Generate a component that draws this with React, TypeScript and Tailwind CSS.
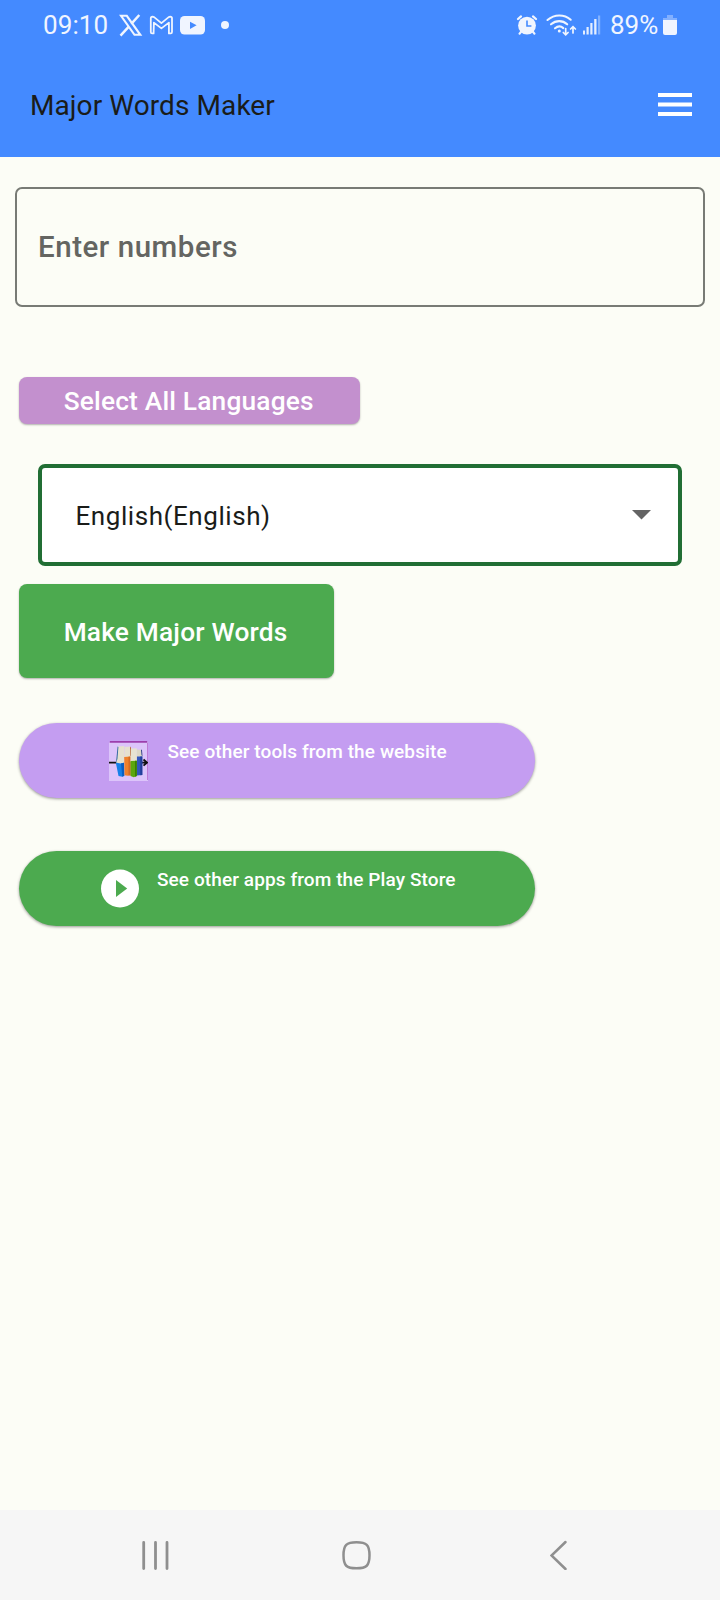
import React from "react";

function StatusLeft() {
  return (
    <svg className="ml-[10px] h-[30px] w-[116px]" viewBox="119 10 116 30" fill="none">
      <path d="M121 15.800h5.800l13.500 19h-5.800z" stroke="#f0f5ff" strokeWidth="2.100" />
      <path d="M139.300 15l-8 8.800M128.800 26.600l-8.300 9" stroke="#f0f5ff" strokeWidth="2.500" />
      <path
        d="M153.600 33.400h-1.500q-1.300 0-1.300-1.500V18.300q0-1.700 1.700-1.700l1.600.5 7.300 6 7.300-6 1.600-.5q1.700 0 1.700 1.700v13.600q0 1.500-1.300 1.500h-1.800V22.600l-7.500 5.800-7.500-5.800z"
        stroke="#f0f5ff"
        strokeWidth="1.800"
        strokeLinejoin="round"
      />
      <rect x="180" y="16" width="25" height="18.600" rx="4.500" fill="#f0f5ff" />
      <path d="M190 21.700v7.200l6.600-3.600z" fill="#448aff" />
      <circle cx="225" cy="25" r="4" fill="#f0f5ff" />
    </svg>
  );
}

function StatusRight() {
  return (
    <svg className="mr-[9px] h-[30px] w-[85px]" viewBox="516 10 85 30" fill="none">
      <g stroke="#f0f5ff" strokeLinecap="round">
        <circle cx="527" cy="25.600" r="8.900" fill="#f0f5ff" stroke="none" />
        <path d="M518 19l3-2.600M536 19l-3-2.600M521.200 31.600l-1.600 2M532.800 31.600l1.600 2" strokeWidth="2.300" />
        <path d="M527 20.600v5.400h4.400" stroke="#448aff" strokeWidth="1.600" strokeLinecap="butt" />
        <path d="M547.500 20c7-6 16.500-6 23.200-.3M551 24.300c5-4.200 11.500-4.200 16.200 0M555 28.300c2.700-2.200 6-2.200 8.300-.2" strokeWidth="2.100" />
        <circle cx="559.300" cy="31" r="1.500" fill="#f0f5ff" stroke="none" />
        <path d="M565.700 28.500v6M563.300 32.500l2.400 2.400 2.400-2.400M573 33v-6M570.600 29l2.400-2.400 2.400 2.400" strokeWidth="1.700" />
      </g>
      <g fill="#e4eeff">
        <rect x="583" y="30.500" width="2" height="4" />
        <rect x="586.500" y="27" width="2.200" height="7.500" />
        <rect x="590.300" y="23" width="2.200" height="11.500" />
        <rect x="594.200" y="19" width="2.300" height="15.500" />
        <rect x="598" y="15.500" width="2.200" height="19" opacity=".4" />
      </g>
    </svg>
  );
}

function BooksIcon() {
  return (
    <svg className="h-10 w-[39px] shrink-0" viewBox="0 0 39 40">
      <path d="M0 1h39v39H0z" fill="#dcc4fa" />
      <path d="M1 0h37l.5 1.800H.5z" fill="#9c3fac" />
      <path d="M38.500 2v37" stroke="#bd7bd6" />
      <path d="M0 21.600h8M32 21.600h6M34.500 18.500l3.500 3.100-3.500 3.100" stroke="#111" strokeWidth="1.800" fill="none" />
      <path d="M9 5.500l6.300-.5v17l-8.300.5z" fill="#e6e1cf" />
      <path d="M8.600 5.500l.8.500-1 12-1.400 4z" fill="#2a62a0" />
      <path d="M6.800 21.500l4.700 1 3.500-.8.300 13-2 1-3.800-.6z" fill="#1680e8" />
      <path d="M12 22.500l3-.8.300 13-2 1z" fill="#0b5fc2" />
      <path d="M15.700 6l5.300-.5.800 11-6.500.5z" fill="#e6e1cf" />
      <path d="M15.200 16l6.300-.5v18.700l-3 .5-3-.5z" fill="#ef812c" />
      <path d="M19.500 15.700l2-.2v18.700l-2 .4z" fill="#d66a22" />
      <path d="M21 5.500l1 1v9l-1-1z" fill="#b96a38" />
      <path d="M27.700 8.500l4 .2 1.600 6.800-5.600.5z" fill="#dcd8c6" />
      <path d="M27.700 15.500h5.600V34l-5.600.5z" fill="#3157bd" />
      <path d="M31.300 15.500h2V34l-2 .2z" fill="#233e99" />
      <path d="M32 8.500l1 .5.500 6.500-1-1.500z" fill="#2a3e80" />
      <path d="M21.800 7.500l6-.3v13l-6.300.8z" fill="#e6e3d2" />
      <path d="M21.500 20l6.300-.3V35l-3 1.200-3.300-1.200z" fill="#5ba70e" />
      <path d="M26 19.800l1.800-.1V35l-1.800.8z" fill="#398006" />
    </svg>
  );
}

export default function App() {
  return (
    <div className="flex h-[1600px] w-[720px] flex-col overflow-hidden bg-[#fcfdf6] font-['Roboto',sans-serif]">
      <header className="flex h-[157px] flex-col bg-[#448aff]">
        <div className="flex h-[50px] items-center justify-between pr-[43px] pl-[43px] text-[26px] leading-[30px] text-[#f0f5ff]">
          <div className="flex items-center">
            <span className="w-[66px] whitespace-nowrap tracking-[0.1px]">09:10</span>
            <StatusLeft />
          </div>
          <div className="flex items-center">
            <StatusRight />
            <span className="w-[49px] whitespace-nowrap">89%</span>
            <svg className="ml-1 h-[22px] w-[14px]" viewBox="0 0 14 22">
              <path d="M4 1h6v3h4v3H0V4h4z" fill="#82b0ff" />
              <path d="M0 6h14v13q0 2-2 2H2q-2 0-2-2z" fill="#f0f5ff" />
            </svg>
          </div>
        </div>
        <div className="flex h-[107px] items-center justify-between pt-[2px] pr-7 pl-[30px]">
          <h1 className="pt-[3px] text-[28px] leading-8 tracking-[0.08px] whitespace-nowrap text-[#1a1c19]">Major Words Maker</h1>
          <svg className="h-6 w-[34px]" viewBox="0 0 34 24" fill="#fff">
            <path d="M0 0h34v4H0zM0 9.500h34v4H0zM0 19h34v4H0z" />
          </svg>
        </div>
      </header>

      <main className="flex flex-1 flex-col items-start">
        <div className="mt-[30px] ml-[15px] flex h-[120px] w-[690px] items-center rounded-[7px] border-2 border-[#787b75] pl-[21px]">
          <span className="text-[29.500px] leading-9 font-medium tracking-[0.54px] whitespace-nowrap text-[#646561]">Enter numbers</span>
        </div>

        <button className="mt-[70.400px] ml-[18.700px] flex h-[47px] w-[341px] items-center rounded-lg bg-[#c390ce] pl-[45px] text-[26.300px] leading-8 font-medium tracking-[0.18px] whitespace-nowrap text-white shadow-[0_1px_2px_rgba(0,0,0,0.3)]">
          Select All Languages
        </button>

        <div className="mt-[39.600px] ml-[37.500px] flex h-[102px] w-[644.500px] items-center justify-between rounded-[7px] border-4 border-[#216e34] bg-white pr-[27.500px] pl-[34px]">
          <span className="pt-[2px] text-[26px] leading-8 tracking-[0.56px] whitespace-nowrap text-[#1a1c19]">English(English)</span>
          <svg className="h-[10px] w-[19px]" viewBox="0 0 19 10">
            <path d="M0 0h19L9.500 9.600z" fill="#646464" />
          </svg>
        </div>

        <button className="mt-[18.300px] ml-[18.700px] flex h-[94px] w-[315px] items-center rounded-lg bg-[#4caa4f] pt-px pl-[45px] text-[26.300px] leading-8 font-medium tracking-[0.18px] whitespace-nowrap text-white shadow-[0_1px_2px_rgba(0,0,0,0.3)]">
          Make Major Words
        </button>

        <button className="mt-[45px] ml-[18.700px] flex h-[75px] w-[516px] items-start rounded-full bg-[#c49df1] pt-[17.700px] pl-[90.800px] text-left text-white shadow-[0_1px_3px_rgba(0,0,0,0.4)]">
          <BooksIcon />
          <span className="ml-[19px] text-[19px] leading-[22px] font-medium tracking-[0.1px] whitespace-nowrap">See other tools from the website</span>
        </button>

        <button className="mt-[52.500px] ml-[18.700px] flex h-[75px] w-[516px] items-start rounded-full bg-[#4caa4f] pt-[18px] pl-[82px] text-left text-white shadow-[0_1px_3px_rgba(0,0,0,0.4)]">
          <svg className="h-[39px] w-[38px] shrink-0" viewBox="0 0 38 39">
            <circle cx="19" cy="19.500" r="19" fill="#fff" />
            <path d="M15 11v17l11.200-8.500z" fill="#4caa4f" />
          </svg>
          <span className="ml-[18.300px] text-[19px] leading-[22px] font-medium tracking-[0.1px] whitespace-nowrap">See other apps from the Play Store</span>
        </button>
      </main>

      <nav className="flex h-[90px] items-center bg-[#f6f6f6] pl-[141px]">
        <svg className="h-[30px] w-[29px]" viewBox="0 0 29 30" stroke="#8f8f8f" strokeWidth="2.800" strokeLinecap="round">
          <path d="M2.700 2.500v26M14.500 2.500v26M26 2.500v26" />
        </svg>
        <svg className="ml-[171.500px] h-[30px] w-[30px]" viewBox="0 0 30 30" fill="none" stroke="#8f8f8f" strokeWidth="2.500">
          <path d="M14.500 2.300c10 0 13 2.500 13 13s-3 13-13 13-13-2.500-13-13 3-13 13-13z" />
        </svg>
        <svg className="ml-[178.500px] h-[30px] w-[17px]" viewBox="0 0 17 30" fill="none" stroke="#8f8f8f" strokeWidth="2.500" strokeLinecap="round">
          <path d="M15.500 2L1.500 15.500l14 13.500" />
        </svg>
      </nav>
    </div>
  );
}
